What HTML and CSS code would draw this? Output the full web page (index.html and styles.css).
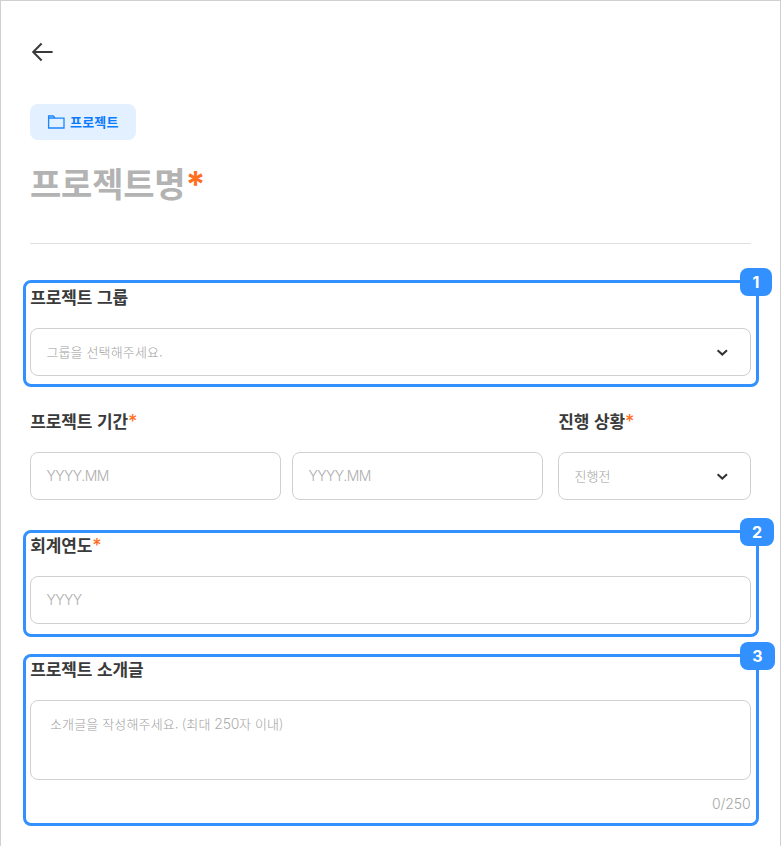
FILE: index.html
```html
<!DOCTYPE html>
<html lang="ko">
<head>
<meta charset="utf-8">
<title>프로젝트</title>
<link rel="stylesheet" href="styles.css">
</head>
<body>
<main class="page">
  <svg class="back" width="24" height="24" viewBox="0 0 24 24"><path d="M22.6 12H3.6M11.6 3.5L3.2 12L11.6 20.5"/></svg>
  <div class="chip">
    <svg class="folder" width="18" height="16" viewBox="0 0 18 16"><path class="tab" d="M1.6 4.2V1.8H6.2L8.2 4.2Z"/><path d="M1.6 4.2V14H17V4.2H1.6V1.8H6.2L8.2 4.2"/></svg>
    <span>프로젝트</span>
  </div>
  <h1 class="title">프로젝트명<span class="req">*</span></h1>
  <hr class="divider">

  <section class="frame">
    <b class="badge badge-1">1</b>
    <h2 class="label">프로젝트 그룹</h2>
    <div class="field"><span class="ko">그룹을 선택해주세요.</span><svg class="chevron" width="14" height="10" viewBox="0 0 14 10"><path d="M2.6 3.2L7.3 7.6L12 3.2"/></svg></div>
  </section>

  <div class="row">
    <section class="period">
      <h2 class="label">프로젝트 기간<span class="req">*</span></h2>
      <div class="pair">
        <div class="field">YYYY.MM</div>
        <div class="field">YYYY.MM</div>
      </div>
    </section>
    <section class="status">
      <h2 class="label">진행 상황<span class="req">*</span></h2>
      <div class="field"><span class="ko">진행전</span><svg class="chevron" width="14" height="10" viewBox="0 0 14 10"><path d="M2.6 3.2L7.3 7.6L12 3.2"/></svg></div>
    </section>
  </div>

  <section class="frame frame-year">
    <b class="badge badge-2">2</b>
    <h2 class="label">회계연도<span class="req">*</span></h2>
    <div class="field">YYYY</div>
  </section>

  <section class="frame frame-intro">
    <b class="badge badge-3">3</b>
    <h2 class="label">프로젝트 소개글</h2>
    <div class="field area"><span class="ko">소개글을 작성해주세요. (최대 </span><span class="num">250</span><span class="ko">자 이내)</span></div>
    <div class="count">0/250</div>
  </section>
</main>
</body>
</html>
```
FILE: styles.css
```css
* { box-sizing: border-box; }
body {
  margin: 0;
  background: #fff;
  color: #3a3a3a;
  font-family: Inter, "Noto Sans CJK KR", sans-serif;
}
.page {
  height: 846px;
  overflow: hidden;
  border: 1px solid #d0d0d0;
  border-bottom: 0;
  padding: 39px 29px 0;
}
svg { display: block; fill: none; }
.back { stroke: #3a3a3a; stroke-width: 2; }
.chip {
  display: flex;
  align-items: center;
  gap: 5px;
  width: 106px;
  height: 36px;
  margin-top: 40px;
  padding-left: 17px;
  border-radius: 8px;
  background: #e3f0ff;
  color: #0a7aff;
  font: 700 13px/20px "Noto Sans CJK KR", sans-serif;
  letter-spacing: 0.2px;
}
.folder { stroke: #1b84ff; stroke-width: 1.3; }
.folder .tab { fill: #8fc2ff; stroke: none; }
.title {
  margin: 17px 0 0;
  height: 52px;
  color: #b3b3b3;
  font: 700 34px/52px "Noto Sans CJK KR", sans-serif;
  letter-spacing: -0.2px;
}
.req { color: #ff6f1f; font-family: Inter, sans-serif; font-weight: 500; }
.title .req { font-size: 36px; font-weight: 700; line-height: 1; }
.divider { height: 1px; margin: 34px 0 36px; border: 0; background: #e0e0e0; }
.frame {
  position: relative;
  height: 107px;
  margin: 0 -8px 0 -7px;
  padding: 2px 5px 0 4px;
  border: 3px solid #3290ff;
  border-radius: 8px;
}
.label {
  height: 24px;
  margin: 0 0 19px;
  padding-left: 0.2px;
  font: 700 17px/24px "Noto Sans CJK KR", sans-serif;
  letter-spacing: -0.1px;
}
.label .req { font-size: 18px; line-height: 1; }
.field {
  display: flex;
  align-items: center;
  height: 48px;
  padding: 0 21px 0 15.4px;
  border: 1px solid #d0d0d0;
  border-radius: 8px;
  color: #adadad;
  font-size: 14px;
  font-weight: 300;
  line-height: 20px;
  letter-spacing: -0.5px;
}
.ko { color: #a0a0a0; font: 300 13px/20px "Noto Sans CJK KR", sans-serif; letter-spacing: 0.15px; white-space: pre; }
.num { letter-spacing: -0.3px; }
.chevron { margin-left: auto; stroke: #333; stroke-width: 2; }
.row { display: flex; gap: 15px; margin-top: 22px; }
.period { width: 513px; }
.pair { display: flex; gap: 11px; }
.pair .field { flex: 1; }
.status { flex: 1; }
.frame-year { margin-top: 30px; padding-top: 0; }
.frame-intro { height: 172px; margin-top: 17px; padding-top: 0; }
.area { align-items: flex-start; height: 80px; padding: 13px 19px; }
.count { margin: 14px 0.5px 0 0; text-align: right; font-size: 14px; font-weight: 300; line-height: 20px; letter-spacing: -0.1px; color: #a6a6a6; }
.badge {
  position: absolute;
  left: 714px;
  top: -15px;
  height: 28px;
  border-radius: 8px;
  background: #3290ff;
  color: #fff;
  font-size: 16px;
  font-weight: 700;
  line-height: 28px;
  text-align: center;
}
.badge-1 { width: 32px; }
.badge-2 { width: 34px; }
.badge-3 { width: 35px; }
```
